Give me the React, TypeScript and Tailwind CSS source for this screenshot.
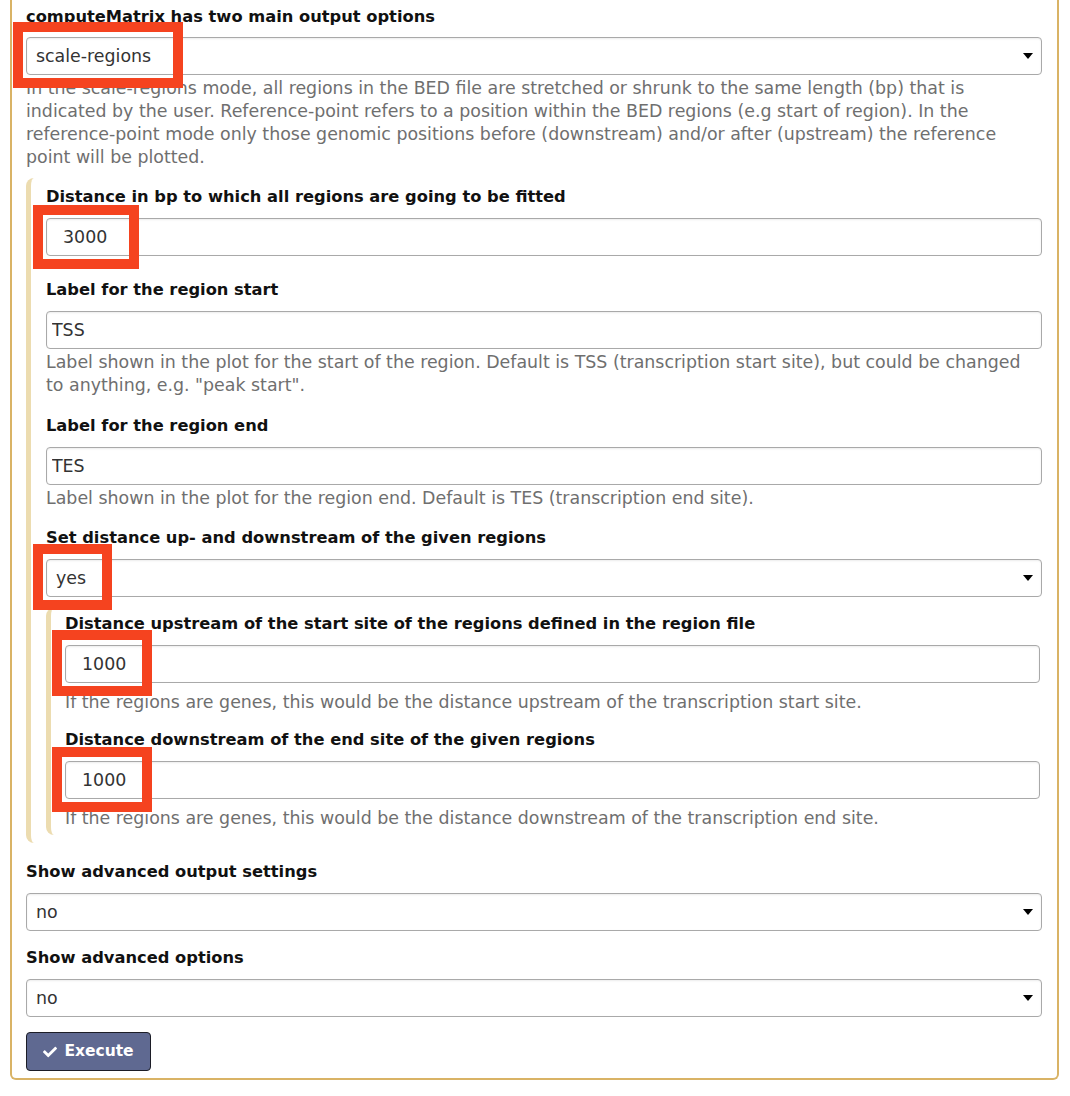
import { FaCheck } from "react-icons/fa";

const font = { fontFamily: '"DejaVu Sans", "Noto Sans", sans-serif' };

export default function App() {
  return (
    <div className="relative min-h-[1096px] bg-white text-[17.4px] text-[#111]" style={font}>
      <div className="ml-[10px] w-[1049px] border-2 border-t-0 border-[#d9b365] rounded-b-[6px] pl-[14px] pr-[15px] pt-[6px] pb-[7px]">
        <Label className="mb-[9px]">computeMatrix has two main output options</Label>
        <Select value="scale-regions" />
        <Help>
          In the scale-regions mode, all regions in the BED file are stretched or shrunk to the same length (bp) that is
          <br />
          indicated by the user. Reference-point refers to a position within the BED regions (e.g start of region). In the
          <br />
          reference-point mode only those genomic positions before (downstream) and/or after (upstream) the reference
          <br />
          point will be plotted.
        </Help>

        <section className="mt-[9px] border-l-[5px] border-[#ecdcb0] rounded-l-[8px] pl-[15px] pt-[8px] pb-[8px]">
          <Label>Distance in bp to which all regions are going to be fitted</Label>
          <TextInput value="3000" number />
          <div className="h-[23px]" />

          <Label>Label for the region start</Label>
          <TextInput value="TSS" />
          <Help>
            Label shown in the plot for the start of the region. Default is TSS (transcription start site), but could be changed
            <br />
            to anything, e.g. "peak start".
          </Help>
          <div className="h-[18px]" />

          <Label>Label for the region end</Label>
          <TextInput value="TES" />
          <Help>Label shown in the plot for the region end. Default is TES (transcription end site).</Help>
          <div className="h-[17px]" />

          <Label>Set distance up- and downstream of the given regions</Label>
          <Select value="yes" />

          <section className="mt-[11px] border-l-[5px] border-[#ecdcb0] rounded-l-[8px] pl-[14px] pr-[2px] pt-[5px] pb-[5px]">
            <Label>Distance upstream of the start site of the regions defined in the region file</Label>
            <TextInput value="1000" number />
            <div className="h-[6px]" />
            <Help>If the regions are genes, this would be the distance upstream of the transcription start site.</Help>
            <div className="h-[15px]" />

            <Label>Distance downstream of the end site of the given regions</Label>
            <TextInput value="1000" number />
            <div className="h-[6px]" />
            <Help>If the regions are genes, this would be the distance downstream of the transcription end site.</Help>
          </section>
        </section>

        <div className="mt-[18px]">
          <Label>Show advanced output settings</Label>
          <Select value="no" />
        </div>
        <div className="mt-[16px]">
          <Label>Show advanced options</Label>
          <Select value="no" />
        </div>

        <button className="mt-[15px] h-[39px] w-[125px] flex items-center justify-center gap-[7px] rounded-[4px] border-[1.5px] border-[#1c1d26] bg-[#5f6991] text-white font-bold text-[15.5px]">
          <FaCheck className="w-[14px] h-[14px]" />
          Execute
        </button>
      </div>

      {/* annotation boxes */}
      <Mark left={13} top={22} w={170} h={66} />
      <Mark left={33} top={205} w={106} h={64} />
      <Mark left={33} top={544} w={79} h={66} />
      <Mark left={52} top={630} w={100} h={66} />
      <Mark left={52} top={747} w={100} h={65} />
    </div>
  );
}

function Label({ children, className = "mb-[10px]" }: { children: React.ReactNode; className?: string }) {
  return <div className={`font-bold text-[16.3px] leading-[22px] text-[#111] ${className}`}>{children}</div>;
}

function Help({ children }: { children: React.ReactNode }) {
  return <div className="mt-[2px] text-[#6f6f6f] leading-[23px]">{children}</div>;
}

function Select({ value }: { value: string }) {
  return (
    <div className="h-[38px] w-full flex items-center justify-between rounded-[4px] border border-[#a9a9a9] bg-white pl-[9px] pr-[8px] shadow-[inset_0_1px_2px_rgba(0,0,0,0.08)]">
      <span className="text-[#333]">{value}</span>
      <span className="w-0 h-0 border-l-[5px] border-r-[5px] border-t-[6px] border-l-transparent border-r-transparent border-t-black" />
    </div>
  );
}

function TextInput({ value, number }: { value: string; number?: boolean }) {
  return (
    <input
      type="text"
      readOnly
      defaultValue={value}
      className={`block h-[38px] w-full rounded-[4px] border border-[#a9a9a9] bg-white text-[17.4px] text-[#333] outline-none shadow-[inset_0_1px_2px_rgba(0,0,0,0.08)] ${number ? "pl-[16px]" : "pl-[5px]"}`}
      style={font}
    />
  );
}

function Mark({ left, top, w, h }: { left: number; top: number; w: number; h: number }) {
  return (
    <div
      className="absolute border-[10px] border-[#f5431f] pointer-events-none"
      style={{ left, top, width: w, height: h }}
    />
  );
}
